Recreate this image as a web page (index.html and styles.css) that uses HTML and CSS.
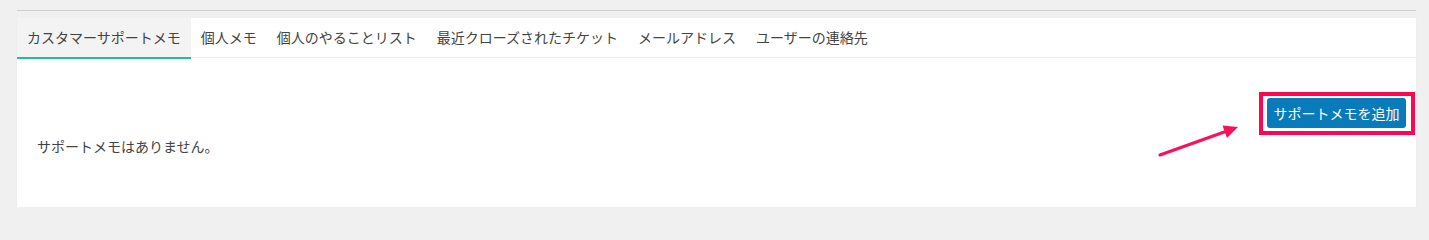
FILE: index.html
```html
<!DOCTYPE html>
<html lang="ja">
<head>
<meta charset="utf-8">
<link rel="stylesheet" href="styles.css">
</head>
<body>
<div class="wrap">
  <div class="rule"></div>
  <div class="panel">
    <ul class="tabs">
      <li class="tab active">カスタマーサポートメモ</li>
      <li class="tab">個人メモ</li>
      <li class="tab">個人のやることリスト</li>
      <li class="tab">最近クローズされたチケット</li>
      <li class="tab">メールアドレス</li>
      <li class="tab">ユーザーの連絡先</li>
    </ul>
    <div class="body">
      <div class="toolbar">
        <div class="btn-wrap">
          <button class="btn">サポートメモを追加</button>
          <span class="highlight"></span>
          <svg class="arrow" width="85" height="38" viewBox="0 0 85 38">
            <line x1="3" y1="33" x2="68" y2="9.7" stroke="#f5135a" stroke-width="3.2" stroke-linecap="round"/>
            <polygon points="81,5 70,16 65.5,3.5" fill="#f5135a"/>
          </svg>
        </div>
      </div>
      <p class="empty">サポートメモはありません。</p>
    </div>
  </div>
</div>
</body>
</html>
```
FILE: styles.css
```css
html, body {
  margin: 0;
  padding: 0;
  background: #f0f0f0;
  font-family: "Noto Sans CJK JP", "Noto Sans", sans-serif;
  font-size: 14px;
  color: #444;
}
.wrap {
  padding: 10px 13px 0 17px;
}
.rule {
  border-top: 1px solid #cfcfcf;
  margin-bottom: 7px;
}
.panel {
  background: #fff;
  box-shadow: 0 1px 1px rgba(0, 0, 0, 0.05);
}
.tabs {
  list-style: none;
  margin: 0;
  padding: 0;
  display: flex;
  align-items: flex-start;
  height: 39px;
  border-bottom: 1px solid #ececec;
}
.tab {
  box-sizing: border-box;
  height: 41px;
  margin-bottom: -2px;
  padding: 0 10px;
  line-height: 39px;
  white-space: nowrap;
  color: #444;
}
.tab.active {
  background: #f3f3f3;
  border-bottom: 2px solid #1fbf98;
}
.body {
  padding: 40px 10px 51px 20px;
}
.toolbar {
  display: flex;
  justify-content: flex-end;
}
.btn-wrap {
  position: relative;
}
.btn {
  display: block;
  box-sizing: border-box;
  width: 139px;
  height: 30px;
  padding: 0;
  border: none;
  border-radius: 3px;
  background: #0a7bba;
  color: #fff;
  font-family: inherit;
  font-size: 14px;
  line-height: 30px;
}
.highlight {
  position: absolute;
  left: -8px;
  right: -9px;
  top: -6px;
  bottom: -7px;
  border: 4px solid #ff0650;
}
.arrow {
  position: absolute;
  left: -110px;
  top: 24px;
}
.empty {
  margin: 8px 0 0;
  line-height: 20px;
}
```
